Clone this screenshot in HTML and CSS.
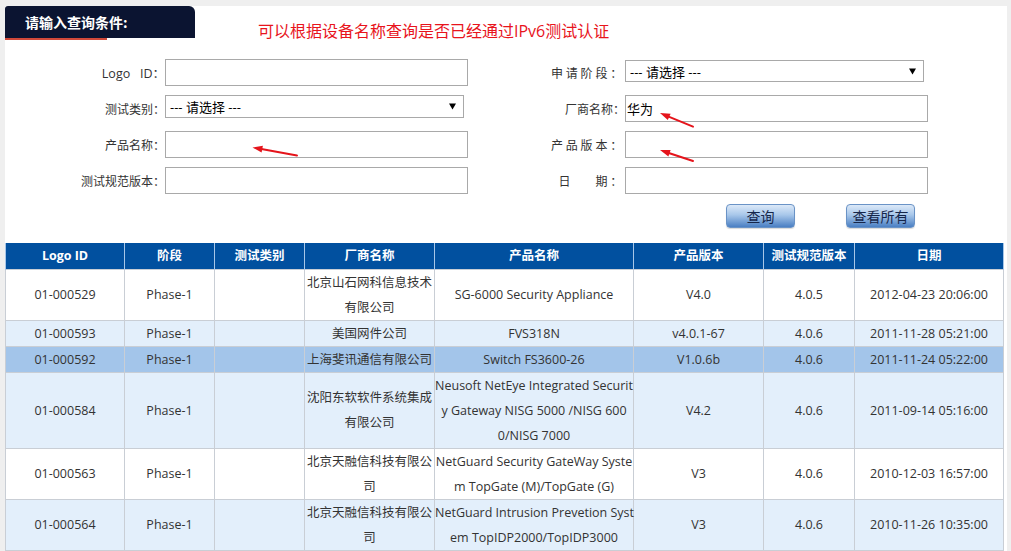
FILE: index.html
```html
<!DOCTYPE html>
<html lang="zh-CN">
<head>
<meta charset="utf-8">
<title>IPv6 测试认证查询</title>
<link rel="stylesheet" href="styles.css">
</head>
<body>
<div class="page">
  <div class="head">
    <div class="tabwrap">
      <div class="tab">请输入查询条件:</div>
      <div class="tabline"></div>
    </div>
    <div class="note">可以根据设备名称查询是否已经通过IPv6测试认证</div>
  </div>

  <form class="query">
    <label class="lbl logo">Logo&nbsp;&nbsp;&nbsp;ID：</label>
    <input class="txt" type="text">
    <label class="lbl wide">申请阶段：</label>
    <div class="sel top"><span>--- 请选择 ---</span><svg class="arr" width="7" height="7" viewBox="0 0 7 7"><path d="M0 0.5H7L3.5 6.5Z" fill="#000"/></svg></div>

    <label class="lbl">测试类别：</label>
    <div class="sel"><span>--- 请选择 ---</span><svg class="arr" width="7" height="7" viewBox="0 0 7 7"><path d="M0 0.5H7L3.5 6.5Z" fill="#000"/></svg></div>
    <label class="lbl">厂商名称：</label>
    <input class="txt" type="text" value="华为">

    <label class="lbl">产品名称：</label>
    <input class="txt" type="text">
    <label class="lbl wide">产品版本：</label>
    <input class="txt" type="text">

    <label class="lbl">测试规范版本：</label>
    <input class="txt" type="text">
    <label class="lbl wide">日<span class="gap"></span>期：</label>
    <input class="txt" type="text">
  </form>

  <div class="btns">
    <button class="btn" type="button">查询</button>
    <button class="btn" type="button">查看所有</button>
  </div>

  <table class="grid">
    <colgroup>
      <col style="width:119px"><col style="width:90px"><col style="width:90px"><col style="width:130px">
      <col style="width:199px"><col style="width:130px"><col style="width:91px"><col style="width:149px">
    </colgroup>
    <thead>
      <tr><th>Logo ID</th><th>阶段</th><th>测试类别</th><th>厂商名称</th><th>产品名称</th><th>产品版本</th><th>测试规范版本</th><th>日期</th></tr>
    </thead>
    <tbody>
      <tr><td>01-000529</td><td>Phase-1</td><td></td><td>北京山石网科信息技术<br>有限公司</td><td>SG-6000 Security Appliance</td><td>V4.0</td><td>4.0.5</td><td>2012-04-23 20:06:00</td></tr>
      <tr class="alt"><td>01-000593</td><td>Phase-1</td><td></td><td>美国网件公司</td><td>FVS318N</td><td>v4.0.1-67</td><td>4.0.6</td><td>2011-11-28 05:21:00</td></tr>
      <tr class="on"><td>01-000592</td><td>Phase-1</td><td></td><td>上海斐讯通信有限公司</td><td>Switch FS3600-26</td><td>V1.0.6b</td><td>4.0.6</td><td>2011-11-24 05:22:00</td></tr>
      <tr class="alt"><td>01-000584</td><td>Phase-1</td><td></td><td>沈阳东软软件系统集成<br>有限公司</td><td class="prod">Neusoft NetEye Integrated Securit<br>y Gateway NISG 5000 /NISG 600<br>0/NISG 7000</td><td>V4.2</td><td>4.0.6</td><td>2011-09-14 05:16:00</td></tr>
      <tr><td>01-000563</td><td>Phase-1</td><td></td><td>北京天融信科技有限公<br>司</td><td class="prod">NetGuard Security GateWay Syste<br>m TopGate (M)/TopGate (G)</td><td>V3</td><td>4.0.6</td><td>2010-12-03 16:57:00</td></tr>
      <tr class="alt"><td>01-000564</td><td>Phase-1</td><td></td><td>北京天融信科技有限公<br>司</td><td class="prod">NetGuard Intrusion Prevetion Syst<br>em TopIDP2000/TopIDP3000</td><td>V3</td><td>4.0.6</td><td>2010-11-26 10:35:00</td></tr>
    </tbody>
  </table>
</div>

<svg class="marks" width="1011" height="551" viewBox="0 0 1011 551">
  <g stroke="#e5141b" stroke-width="2" stroke-linecap="round">
    <line x1="260" y1="148.8" x2="297" y2="155.5"/>
    <line x1="668" y1="116.4" x2="693" y2="126.7"/>
    <line x1="668" y1="152.7" x2="693" y2="161"/>
  </g>
  <g fill="#e5141b">
    <polygon points="252.5,147.5 261.6,152.6 262.9,145.8"/>
    <polygon points="660,113 667.8,120.1 670.6,113.7"/>
    <polygon points="660,150 668.4,156.5 670.6,149.9"/>
  </g>
</svg>
</body>
</html>
```

FILE: styles.css
```css
* { box-sizing: border-box; }

html, body { margin: 0; padding: 0; }

body {
  position: relative;
  width: 1011px;
  height: 551px;
  overflow: hidden;
  background: #efefef;
  font-family: "Open Sans", "Noto Sans CJK SC", sans-serif;
  color: #333;
}

.page {
  margin: 6px 0 0 5px;
  width: 1002px;
  min-height: 545px;
  background: #fff;
}

/* header */
.head {
  display: flex;
  align-items: flex-start;
  height: 34px;
}

.tabwrap {
  width: 190px;
  display: flex;
  flex-direction: column;
}

.tab {
  height: 32px;
  padding-left: 20px;
  background: #0b1431;
  border-radius: 3px 6px 0 0;
  color: #fff;
  font: bold 14px/32px "Noto Sans CJK SC", sans-serif;
}

.tabline {
  width: 102px;
  height: 2px;
  background: #d0493a;
}

.note {
  margin-left: 63px;
  padding-top: 14px;
  font-size: 16px;
  line-height: 22px;
  color: #e8141c;
}

/* form */
.query {
  display: grid;
  grid-template-columns: 160px 303px 157px 303px;
  grid-auto-rows: 27px;
  row-gap: 9px;
  margin: 19px 0 0;
}

.lbl {
  justify-self: end;
  align-self: center;
  white-space: nowrap;
  font-size: 12px;
  color: #333;
}

.lbl.logo { font-size: 12.5px; }

.lbl.wide { letter-spacing: 2.8px; }

.gap { display: inline-block; width: 22px; }

.txt {
  width: 303px;
  height: 27px;
  margin: 0;
  padding: 0 1px;
  border: 1px solid #a9a9a9;
  background: #fff;
  outline: none;
  font: 13px "Open Sans", "Noto Sans CJK SC", sans-serif;
  color: #000;
}

.sel {
  width: 299px;
  height: 23px;
  align-self: start;
  display: flex;
  align-items: center;
  justify-content: space-between;
  padding: 0 7px 0 4px;
  border: 1px solid #a9a9a9;
  background: #fff;
  font-size: 13px;
  color: #000;
}

.sel.top { margin-top: 1px; height: 22px; }

.arr { display: block; }

/* buttons */
.btns {
  display: flex;
  gap: 51px;
  padding-left: 721px;
  margin-top: 10px;
}

.btn {
  width: 69px;
  height: 24px;
  padding: 0;
  border: 1px solid #6a93c6;
  border-radius: 4px;
  background: linear-gradient(#dce9f8, #a8c7ea 45%, #4a7fc3);
  box-shadow: 0 1px 1px rgba(0, 0, 0, 0.15);
  font: 14px "Noto Sans CJK SC", sans-serif;
  color: #16264a;
}

/* table */
.grid {
  margin-top: 15px;
  width: 998px;
  border-collapse: collapse;
  table-layout: fixed;
  font-size: 12.5px;
}

.grid th {
  height: 26px;
  padding: 0;
  line-height: 25px;
  background: #01509f;
  color: #fff;
  font-weight: bold;
  border-left: 1px solid #a7c6e8;
  border-right: 1px solid #a7c6e8;
}

.grid td {
  padding: 0;
  line-height: 25px;
  text-align: center;
  word-break: break-all;
  border: 1px solid #c9ced5;
  color: #333;
}

.grid td.prod { white-space: nowrap; }

.grid tr.alt td { background: #e3effb; }
.grid tr.on td { background: #a3c5ea; }

/* annotations drawn over the page */
.marks {
  position: absolute;
  left: 0;
  top: 0;
  pointer-events: none;
}
```
